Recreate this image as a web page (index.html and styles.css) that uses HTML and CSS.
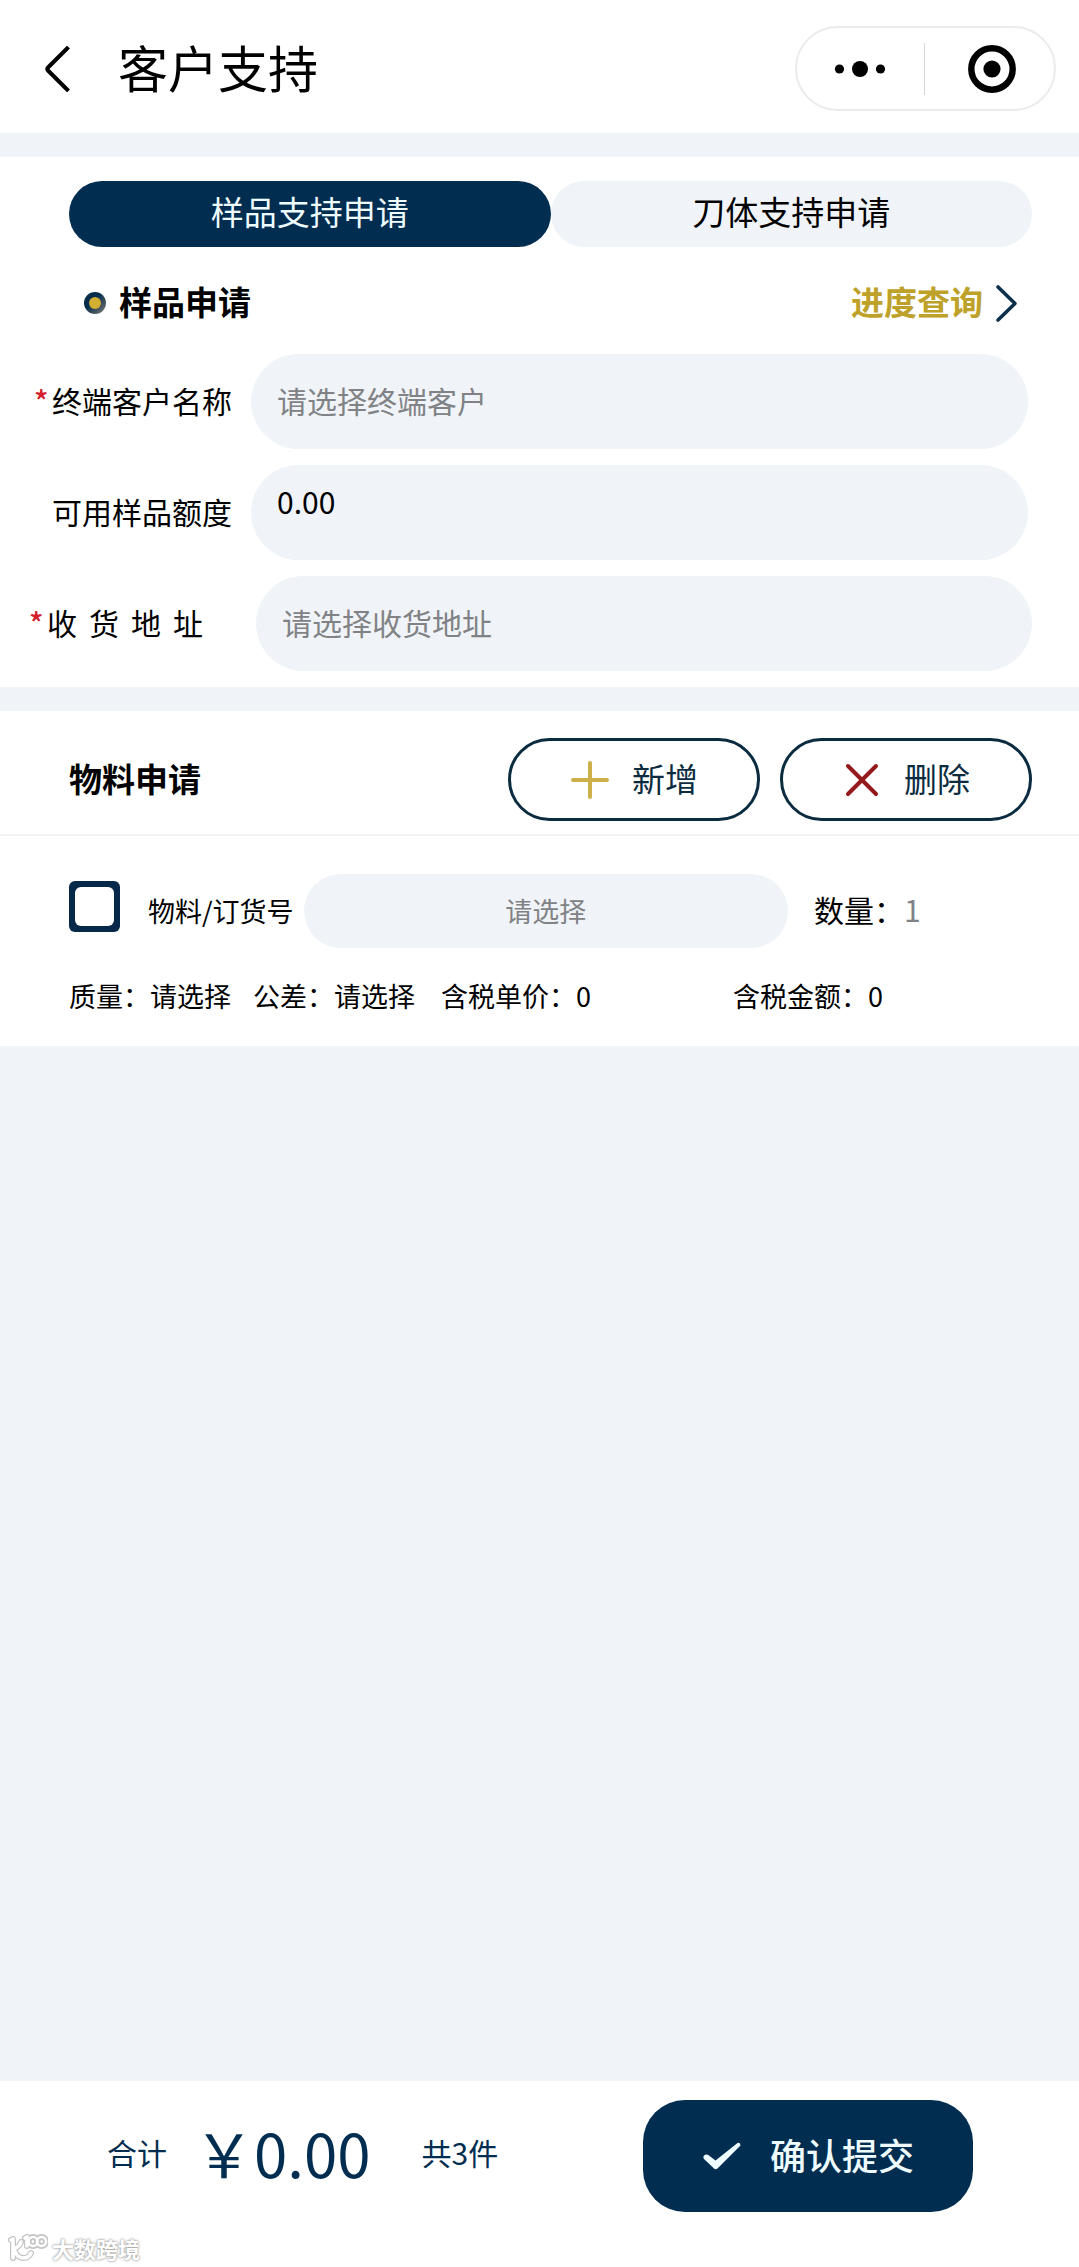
FILE: index.html
```html
<!DOCTYPE html>
<html lang="zh-CN">
<head>
<meta charset="utf-8">
<meta name="viewport" content="width=device-width, initial-scale=1">
<title>客户支持</title>
<link rel="stylesheet" href="styles.css">
</head>
<body>
<header class="navbar">
  <button class="back" type="button" aria-label="返回">
    <svg width="26" height="46" viewBox="0 0 26 46" fill="none" stroke="#000" stroke-width="4" stroke-linejoin="round"><path d="M23.500 1 L3 21.500 Q1.500 23 3 24.500 L23.500 45"/></svg>
  </button>
  <h1 class="navbar-title">客户支持</h1>
  <div class="capsule">
    <button class="capsule-btn capsule-more" type="button" aria-label="更多">
      <svg width="52" height="20" viewBox="0 0 52 20"><circle cx="5.500" cy="10" r="4.600"/><circle cx="26" cy="10" r="8"/><circle cx="46.500" cy="10" r="4.600"/></svg>
    </button>
    <button class="capsule-btn capsule-close" type="button" aria-label="关闭">
      <svg width="50" height="50" viewBox="0 0 50 50"><circle cx="25" cy="25" r="20.700" fill="none" stroke="#000" stroke-width="6.400"/><circle cx="25" cy="25" r="8.600"/></svg>
    </button>
  </div>
</header>

<main class="content">
  <section class="panel">
    <div class="tabs" role="tablist">
      <button class="tab tab-active" type="button" role="tab" aria-selected="true">样品支持申请</button>
      <button class="tab" type="button" role="tab" aria-selected="false">刀体支持申请</button>
    </div>
    <div class="subhead">
      <svg class="bullet" width="24" height="24" viewBox="0 0 24 24">
        <defs><linearGradient id="ring" x1="0" y1="0" x2="1" y2="1"><stop offset="0.400" stop-color="#052c4b"/><stop offset="0.800" stop-color="#566168"/></linearGradient></defs>
        <circle cx="12" cy="12" r="11" fill="url(#ring)"/><circle cx="12" cy="12" r="6" fill="#d2ae32"/>
      </svg>
      <h2 class="heading">样品申请</h2>
      <a class="progress" href="#progress"><span class="progress-text">进度查询</span>
        <svg width="24" height="40" viewBox="0 0 24 40" fill="none" stroke="#0d2f4a" stroke-width="3.600" stroke-linecap="round" stroke-linejoin="round"><path d="M3 4 L20 20.500 L3 37"/></svg>
      </a>
    </div>
    <form class="form">
      <div class="row">
        <label class="label" for="customer"><span class="star">*</span>终端客户名称</label>
        <input class="field" id="customer" type="text" placeholder="请选择终端客户" readonly>
      </div>
      <div class="row">
        <label class="label" for="quota"><span class="star"></span>可用样品额度</label>
        <output class="field field-value" id="quota">0.00</output>
      </div>
      <div class="row row-wide">
        <label class="label" for="address"><span class="star">*</span><span class="spread">收 货 地 址</span></label>
        <input class="field" id="address" type="text" placeholder="请选择收货地址" readonly>
      </div>
    </form>
  </section>

  <section class="panel">
    <div class="materials-head">
      <h2 class="heading">物料申请</h2>
      <button class="outline" type="button">
        <svg width="40" height="40" viewBox="0 0 40 40" stroke="#cdb04a" stroke-width="4" stroke-linecap="round"><path d="M3 20H37M20 3V37"/></svg>
        <span class="outline-text">新增</span>
      </button>
      <button class="outline" type="button">
        <svg width="40" height="40" viewBox="0 0 40 40" stroke="#94191c" stroke-width="4" stroke-linecap="round"><path d="M6 6L34 34M34 6L6 34"/></svg>
        <span class="outline-text">删除</span>
      </button>
    </div>
    <div class="item">
      <div class="item-main">
        <input class="check" type="checkbox" aria-label="选择物料">
        <label class="item-label" for="material">物料/订货号</label>
        <input class="picker" id="material" type="text" placeholder="请选择" readonly>
        <label class="qty-label" for="qty">数量：</label>
        <input class="qty" id="qty" type="text" value="1">
      </div>
      <div class="item-specs">
        <span>质量：<button class="choose" type="button">请选择</button></span>
        <span>公差：<button class="choose" type="button">请选择</button></span>
        <span>含税单价：0</span>
        <span>含税金额：0</span>
      </div>
    </div>
  </section>
</main>

<footer class="bar">
  <span class="total-label">合计</span>
  <strong class="total">￥0.00</strong>
  <span class="count">共3件</span>
  <button class="submit" type="button">
    <svg width="40" height="30" viewBox="0 0 40 30" fill="#eefcff"><path d="M2 14.500 Q4.500 12.500 7 14.500 L13.500 19.500 L35.500 2 Q38.500 1 38.500 4.500 L16 27 Q13.500 29.500 11.500 27 L2 18 Q0.500 16 2 14.500Z"/></svg>
    <span class="submit-text">确认提交</span>
  </button>
</footer>

<div class="watermark">
  <svg width="40" height="30" viewBox="0 0 40 30" fill="none" stroke-linecap="round" stroke-linejoin="round">
    <g stroke="#c4c4c4" stroke-width="6"><path d="M3 7L5 6V25M13 9Q12 13 6 16Q9 25 15 25Q21 25 23 20M17 5L19 4V13"/><circle cx="25" cy="8.500" r="4.500"/><circle cx="33.500" cy="8.500" r="4.500"/></g>
    <g stroke="#fff" stroke-width="3.600"><path d="M3 7L5 6V25M13 9Q12 13 6 16Q9 25 15 25Q21 25 23 20M17 5L19 4V13"/></g>
    <g stroke="#fff" stroke-width="2.600"><circle cx="25" cy="8.500" r="4.500"/><circle cx="33.500" cy="8.500" r="4.500"/></g>
  </svg>
  大数跨境
</div>
</body>
</html>
```
FILE: styles.css
```css
:root {
  --navy: #002d50;
  --soft: #f0f4f8;
  --muted: #808285;
}

* {
  box-sizing: border-box;
}

body {
  position: relative;
  display: flex;
  flex-direction: column;
  min-height: 100vh;
  margin: 0;
  background: var(--soft);
  color: #000;
  font-family: "Noto Sans CJK SC", sans-serif;
  font-size: 30px;
  line-height: 44px;
}

button,
input {
  margin: 0;
  padding: 0;
  border: 0;
  background: none;
  color: inherit;
  font: inherit;
}

svg {
  display: block;
  flex: none;
}

h1,
h2 {
  margin: 0;
}

.navbar {
  display: flex;
  align-items: center;
  padding: 26px 23px 22px 45px;
  background: #fff;
}

.navbar-title {
  flex: 1;
  margin-left: 47px;
  padding-bottom: 6px;
  font-size: 50px;
  font-weight: 400;
  line-height: 76px;
}

.capsule {
  display: flex;
  width: 261px;
  height: 85px;
  align-items: center;
  border: 2px solid #ebebeb;
  border-radius: 43px;
}

.capsule-btn {
  display: flex;
  flex: 1;
  height: 52px;
  align-items: center;
  justify-content: center;
}

.capsule-more {
  padding-right: 2px;
}

.capsule-close {
  padding-left: 4px;
  border-left: 1px solid #d8d8d8;
}

.content {
  display: flex;
  flex: 1;
  flex-direction: column;
  gap: 24px;
  padding-top: 24px;
}

.panel {
  background: #fff;
}

.tabs {
  display: flex;
  padding: 24px 47px 0 69px;
}

.tab {
  flex: 1;
  height: 66px;
  padding-bottom: 6px;
  border-radius: 33px;
  background: var(--soft);
  font-size: 33px;
}

.tab-active {
  background: var(--navy);
  color: #effcff;
}

.subhead {
  display: flex;
  align-items: center;
  padding: 32px 60px 27px 83px;
}

.heading {
  flex: 1;
  padding-bottom: 4px;
  font-size: 33px;
  font-weight: 700;
}

.bullet {
  margin-right: 12px;
}

.progress {
  display: flex;
  align-items: center;
  gap: 12px;
  color: #bda128;
  font-size: 33px;
  font-weight: 700;
  text-decoration: none;
}

.progress-text,
.outline-text,
.submit-text {
  padding-bottom: 4px;
}

.form {
  display: flex;
  flex-direction: column;
  gap: 16px;
  padding-bottom: 16px;
}

.row {
  display: flex;
  align-items: center;
  padding: 0 51px 0 34px;
}

.row-wide {
  padding: 0 47px 0 29px;
}

.label {
  display: flex;
  flex: none;
  width: 217px;
  padding-bottom: 4px;
}

.row-wide .label {
  width: 227px;
}

.star {
  width: 18px;
  color: #d5202b;
  font-weight: 500;
}

.spread {
  width: 156px;
  text-align-last: justify;
}

.field {
  flex: 1;
  min-width: 0;
  height: 95px;
  padding: 0 26px 4px;
  border-radius: 48px;
  background: var(--soft);
}

.field-value {
  padding-top: 14px;
}

input::placeholder {
  color: var(--muted);
  opacity: 1;
}

.materials-head {
  display: flex;
  align-items: center;
  gap: 20px;
  padding: 27px 47px 13px 69px;
  border-bottom: 2px solid #f0f2f3;
}

.outline {
  display: flex;
  width: 252px;
  height: 83px;
  align-items: center;
  justify-content: center;
  gap: 22px;
  border: 3px solid #0b2c40;
  border-radius: 42px;
  color: #0b2c40;
  font-size: 33px;
}

.item {
  padding: 38px 47px 28px 69px;
  font-size: 27px;
}

.item-main {
  display: flex;
  align-items: center;
}

.check {
  display: grid;
  width: 51px;
  height: 51px;
  margin: 0 28px 10px 0;
  padding: 6px;
  border-radius: 6px;
  background: #06294a;
  appearance: none;
}

.check::before {
  border-radius: 6px;
  background: #fff;
  content: "";
}

.check:checked::before {
  background: #06294a;
}

.item-label {
  margin-right: 10px;
}

.picker {
  flex: 1;
  min-width: 0;
  height: 74px;
  padding-bottom: 2px;
  border-radius: 37px;
  background: var(--soft);
  text-align: center;
}

.qty-label {
  margin-left: 26px;
  padding-bottom: 4px;
  font-size: 30px;
}

.qty {
  width: 128px;
  padding-bottom: 4px;
  color: var(--muted);
  font-size: 30px;
}

.item-specs {
  display: grid;
  grid-template-columns: 184px 188px 292px 1fr;
  margin-top: 26px;
}

.bar {
  display: flex;
  align-items: center;
  padding: 19px 106px 55px 107px;
  background: #fff;
  color: var(--navy);
}

.total-label,
.total,
.count {
  padding-bottom: 8px;
}

.total {
  margin: 0 51px 0 27px;
  font-size: 60px;
  font-weight: 400;
}

.count {
  flex: 1;
}

.submit {
  display: flex;
  width: 330px;
  height: 112px;
  align-items: center;
  justify-content: center;
  gap: 28px;
  border-radius: 42px;
  background: var(--navy);
  color: #effcff;
  font-size: 36px;
  font-weight: 500;
}

.watermark {
  position: absolute;
  bottom: 1px;
  left: 8px;
  display: flex;
  align-items: center;
  gap: 4px;
  color: #fff;
  font-size: 22px;
  font-weight: 700;
  line-height: 36px;
  text-shadow: 0 0 2px #999, 0 0 3px #aaa;
}
```
